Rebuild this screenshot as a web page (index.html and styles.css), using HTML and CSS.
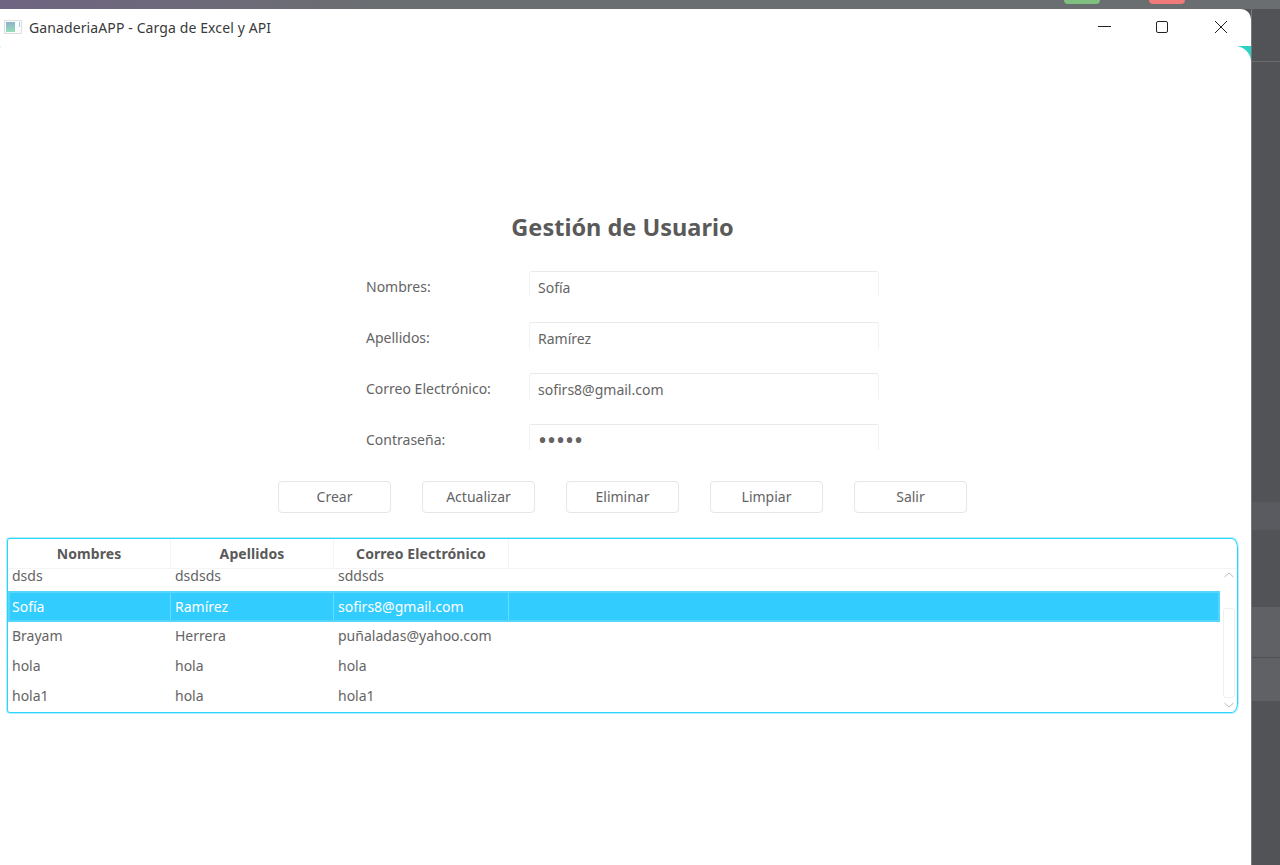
FILE: index.html
```html
<!DOCTYPE html>
<html>
<head>
    <title>GanaderiaAPP - Carga de Excel y API</title>
    <link rel="stylesheet" href="styles.css">
</head>
<body>
    <div id="top-strip">
        <span class="pill pill-green"></span>
        <span class="pill pill-red"></span>
    </div>

    <div id="desktop">
        <div id="app-window">
            <div id="title-bar">
                <svg class="app-icon" width="18" height="14" viewBox="0 0 18 14">
                    <defs>
                        <linearGradient id="icon-fill" x1="0" y1="0" x2="0" y2="1">
                            <stop offset="0" stop-color="#8fb0cc"/>
                            <stop offset="1" stop-color="#93dfb8"/>
                        </linearGradient>
                    </defs>
                    <rect x="0.5" y="0.5" width="17" height="13" fill="#fbfbfb" stroke="#dedede"/>
                    <rect x="2" y="2" width="9" height="10" fill="url(#icon-fill)"/>
                    <rect x="15" y="2" width="1" height="5" fill="#9ccde6"/>
                </svg>
                <span id="window-title">GanaderiaAPP - Carga de Excel y API</span>
                <div id="window-controls">
                    <svg class="control-min" width="14" height="14" viewBox="0 0 14 14"><path d="M1 6.5H14" stroke="#222" fill="none"/></svg>
                    <svg width="14" height="14" viewBox="0 0 14 14"><rect x="1.5" y="1.5" width="11" height="11" rx="1.5" stroke="#222" fill="none"/></svg>
                    <svg width="14" height="14" viewBox="0 0 14 14"><path d="M1 1L13 13M13 1L1 13" stroke="#222" fill="none"/></svg>
                </div>
            </div>

            <div id="scene">
                <div id="content">
                    <h1>Gestión de Usuario</h1>

                    <form id="user-form">
                        <label for="nombres">Nombres:</label>
                        <input type="text" id="nombres" value="Sofía">

                        <label for="apellidos">Apellidos:</label>
                        <input type="text" id="apellidos" value="Ramírez">

                        <label for="correo">Correo Electrónico:</label>
                        <input type="text" id="correo" value="sofirs8@gmail.com">

                        <label for="clave">Contraseña:</label>
                        <input type="password" id="clave" value="12345">
                    </form>

                    <div id="actions">
                        <button type="button">Crear</button>
                        <button type="button">Actualizar</button>
                        <button type="button">Eliminar</button>
                        <button type="button">Limpiar</button>
                        <button type="button">Salir</button>
                    </div>

                    <div id="user-table">
                        <div class="table-head">
                            <div class="col col-1">Nombres</div>
                            <div class="col col-2">Apellidos</div>
                            <div class="col col-3">Correo Electrónico</div>
                        </div>
                        <div class="table-body">
                            <div id="rows">
                                <div class="row">
                                    <div class="col col-1">dsds</div>
                                    <div class="col col-2">dsdsds</div>
                                    <div class="col col-3">sddsds</div>
                                </div>
                                <div class="row selected">
                                    <div class="col col-1">Sofía</div>
                                    <div class="col col-2">Ramírez</div>
                                    <div class="col col-3">sofirs8@gmail.com</div>
                                </div>
                                <div class="row">
                                    <div class="col col-1">Brayam</div>
                                    <div class="col col-2">Herrera</div>
                                    <div class="col col-3">puñaladas@yahoo.com</div>
                                </div>
                                <div class="row">
                                    <div class="col col-1">hola</div>
                                    <div class="col col-2">hola</div>
                                    <div class="col col-3">hola</div>
                                </div>
                                <div class="row">
                                    <div class="col col-1">hola1</div>
                                    <div class="col col-2">hola</div>
                                    <div class="col col-3">hola1</div>
                                </div>
                            </div>
                            <div id="scrollbar">
                                <svg width="12" height="6" viewBox="0 0 12 6"><path d="M1.5 5L6 1L10.5 5" stroke="#bbb" fill="none"/></svg>
                                <div id="thumb"></div>
                                <svg width="12" height="6" viewBox="0 0 12 6"><path d="M1.5 1L6 5L10.5 1" stroke="#bbb" fill="none"/></svg>
                            </div>
                        </div>
                    </div>
                </div>
            </div>
        </div>

        <!-- window behind the app, only this edge shows -->
        <div id="behind">
            <div class="band band-first"></div>
            <div class="band band-a"></div>
            <div class="band band-b"></div>
            <div class="band band-c"></div>
            <div class="band band-d"></div>
            <div class="band band-e"></div>
        </div>
    </div>
</body>
</html>
```

FILE: styles.css
```css
/* Page and what is behind the window */
* {
    box-sizing: border-box;
}

html, body {
    margin: 0;
    height: 865px;
    overflow: hidden;
}

body {
    font-family: "Noto Sans", "Open Sans", Arial, sans-serif;
    font-size: 14px;
    color: #646464;
    background: #525356;
}

#top-strip {
    height: 9px;
    display: flex;
    justify-content: flex-end;
    gap: 49px;
    padding-right: 95px;
    background: linear-gradient(to right, #6f6482, #6a6e70 30%);
}

.pill {
    width: 36px;
    height: 4px;
    border-radius: 0 0 6px 6px;
}

.pill-green {
    background: #7fbf7f;
}

.pill-red {
    background: #f07a7a;
}

#desktop {
    display: flex;
    height: 856px;
}

#behind {
    width: 29px;
    border-left: 1px solid #77787a;
}

.band-first {
    height: 53px;
    border-bottom: 1px solid #6c6d6f;
}

.band-a {
    height: 440px;
}

.band-b {
    height: 28px;
    background: #5a5b60;
}

.band-c {
    height: 77px;
}

.band-d {
    height: 51px;
    background: #606164;
    border-bottom: 1px solid #4f5052;
}

.band-e {
    height: 43px;
    background: #606164;
}

/* The application window */
#app-window {
    width: 1251px;
    display: flex;
    flex-direction: column;
    background: #fff;
    border-top-right-radius: 10px;
    overflow: hidden;
}

#title-bar {
    height: 37px;
    flex: none;
    display: flex;
    align-items: center;
    padding: 0 23px 0 4px;
    color: #3a3a3a;
}

.app-icon {
    margin: -2px 7px 0 0;
}

#window-title {
    flex: 1;
    letter-spacing: 0.11px;
}

#window-controls {
    display: flex;
    gap: 45px;
    margin-top: -2px;
}

.control-min {
    margin-right: -1px;
}

#scene {
    flex: 1;
    background: linear-gradient(to right, #c4f6f6 50%, #2bd2c8 50%);
}

#content {
    height: 100%;
    padding: 165px 13px 0 7px;
    background: #fff;
    border-radius: 3px 16px 0 0;
}

h1 {
    margin: 0 0 28px;
    font-size: 23.5px;
    line-height: 32px;
    font-weight: 700;
    text-align: center;
    color: #5a5a5a;
}

/* Form */
#user-form {
    display: grid;
    grid-template-columns: 163px 350px;
    grid-auto-rows: 26px;
    row-gap: 25px;
    justify-content: center;
    align-items: center;
}

#user-form label {
    padding-top: 4px;
}

#user-form input {
    width: 100%;
    height: 26px;
    padding: 6px 8px 0;
    font: inherit;
    color: #646464;
    background: #fff;
    border: 1px solid #f2f2f2;
    border-top-color: #eaeaea;
    border-bottom: none;
    border-radius: 3px 3px 0 0;
    outline: none;
}

#user-form #clave {
    font-size: 24px;
    line-height: 20px;
    padding-top: 4px;
}

/* Buttons */
#actions {
    display: flex;
    justify-content: center;
    gap: 31px;
    margin: 31px 0 25px;
}

#actions button {
    width: 113px;
    height: 32px;
    padding: 0 0 2px;
    font: inherit;
    color: #646464;
    background: #fff;
    border: 1px solid #e6e6e6;
    border-radius: 4px;
}

/* Table */
#user-table {
    height: 175px;
    display: flex;
    flex-direction: column;
    border: 1px solid #2bd4ff;
    border-radius: 3px 6px 6px 3px / 3px 10px 10px 3px;
    box-shadow: 0 0 0 1px rgba(43, 212, 255, 0.35);
    overflow: hidden;
}

.table-head {
    height: 30px;
    flex: none;
    display: flex;
    font-weight: 700;
    letter-spacing: 0.08px;
    color: #5a5a5a;
    border-bottom: 1px solid #f4f4f4;
}

.table-head .col {
    text-align: center;
    line-height: 29px;
    border-right: 1px solid #f4f4f4;
}

.col {
    padding: 0 4px;
    white-space: nowrap;
}

.col-1 {
    width: 163px;
}

.col-2 {
    width: 163px;
}

.col-3 {
    width: 175px;
}

.table-body {
    flex: 1;
    display: flex;
    min-height: 0;
    overflow: hidden;
}

#rows {
    width: 1212px;
    margin-top: -8px;
}

.row {
    height: 30px;
    display: flex;
    line-height: 30px;
}

.row.selected {
    height: 31px;
    line-height: 27px;
    color: #fff;
    background: #33ccff;
    border: 2px solid #55d6ff;
    margin-bottom: -1px;
}

.row.selected .col {
    border-right: 1px solid #66dcff;
}

.row.selected .col-1 {
    width: 161px;
    padding-left: 2px;
}

#scrollbar {
    flex: 1;
    display: flex;
    flex-direction: column;
    align-items: center;
    padding: 3px 0 0 1px;
}

#thumb {
    width: 12px;
    height: 90px;
    margin: 30px 0 4px;
    background: #fff;
    border: 1px solid #f0f0f0;
    border-radius: 3px;
}
```
